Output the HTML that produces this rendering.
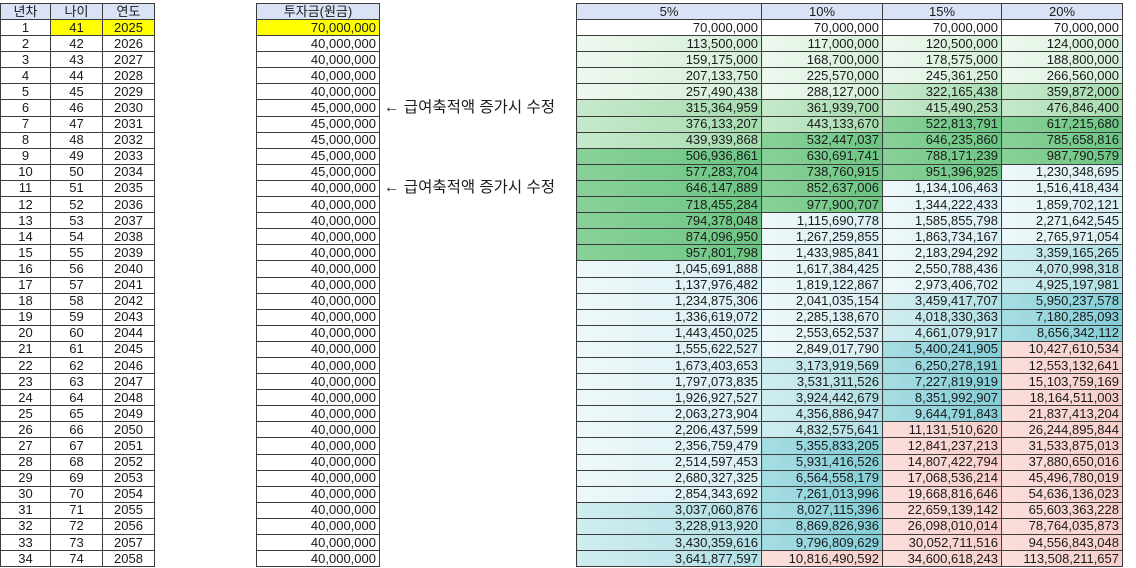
<!DOCTYPE html>
<html><head><meta charset="utf-8"><style>
body{margin:0;width:1136px;height:568px;background:#fff;overflow:hidden;position:relative;font-family:"Liberation Sans","Noto Sans CJK KR",sans-serif;font-size:13px;color:#1a1a1a}
table{position:absolute;border-collapse:collapse;table-layout:fixed;top:3px}
td,th{border:1px solid #3c3c3c;padding:0 3px;height:15.1px;line-height:14px;white-space:nowrap;overflow:hidden;font-weight:normal}
th{background:#d9e3f5;text-align:center;height:15px}
.c td{text-align:center}
.r td{text-align:right}
.y{background:#ffff00}
.g1{background:linear-gradient(90deg,#eef8ef,#d3eed7)}
.g2{background:linear-gradient(90deg,#c6e9cb,#a5dbad)}
.g3{background:linear-gradient(90deg,#88d198,#6cc582)}
.c1{background:linear-gradient(90deg,#eef8fa,#d8eff3)}
.c2{background:linear-gradient(90deg,#d0edf0,#b0dfe5)}
.c3{background:linear-gradient(90deg,#a6dde3,#83cdd6)}
.p{background:linear-gradient(90deg,#fbdedb,#f7ceca)}
.note{position:absolute;left:384px;font-size:15.5px;line-height:16px}
</style></head><body>
<table class="c" style="left:0;width:154px">
<colgroup><col style="width:50px"><col style="width:52px"><col style="width:52px"></colgroup>
<tr><th>년차</th><th>나이</th><th>연도</th></tr>
<tr><td>1</td><td class="y">41</td><td class="y">2025</td></tr>
<tr><td>2</td><td>42</td><td>2026</td></tr>
<tr><td>3</td><td>43</td><td>2027</td></tr>
<tr><td>4</td><td>44</td><td>2028</td></tr>
<tr><td>5</td><td>45</td><td>2029</td></tr>
<tr><td>6</td><td>46</td><td>2030</td></tr>
<tr><td>7</td><td>47</td><td>2031</td></tr>
<tr><td>8</td><td>48</td><td>2032</td></tr>
<tr><td>9</td><td>49</td><td>2033</td></tr>
<tr><td>10</td><td>50</td><td>2034</td></tr>
<tr><td>11</td><td>51</td><td>2035</td></tr>
<tr><td>12</td><td>52</td><td>2036</td></tr>
<tr><td>13</td><td>53</td><td>2037</td></tr>
<tr><td>14</td><td>54</td><td>2038</td></tr>
<tr><td>15</td><td>55</td><td>2039</td></tr>
<tr><td>16</td><td>56</td><td>2040</td></tr>
<tr><td>17</td><td>57</td><td>2041</td></tr>
<tr><td>18</td><td>58</td><td>2042</td></tr>
<tr><td>19</td><td>59</td><td>2043</td></tr>
<tr><td>20</td><td>60</td><td>2044</td></tr>
<tr><td>21</td><td>61</td><td>2045</td></tr>
<tr><td>22</td><td>62</td><td>2046</td></tr>
<tr><td>23</td><td>63</td><td>2047</td></tr>
<tr><td>24</td><td>64</td><td>2048</td></tr>
<tr><td>25</td><td>65</td><td>2049</td></tr>
<tr><td>26</td><td>66</td><td>2050</td></tr>
<tr><td>27</td><td>67</td><td>2051</td></tr>
<tr><td>28</td><td>68</td><td>2052</td></tr>
<tr><td>29</td><td>69</td><td>2053</td></tr>
<tr><td>30</td><td>70</td><td>2054</td></tr>
<tr><td>31</td><td>71</td><td>2055</td></tr>
<tr><td>32</td><td>72</td><td>2056</td></tr>
<tr><td>33</td><td>73</td><td>2057</td></tr>
<tr><td>34</td><td>74</td><td>2058</td></tr>
</table>

<table class="r" style="left:256px;width:124px">
<tr><th>투자금(원금)</th></tr>
<tr><td class="y">70,000,000</td></tr>
<tr><td>40,000,000</td></tr>
<tr><td>40,000,000</td></tr>
<tr><td>40,000,000</td></tr>
<tr><td>40,000,000</td></tr>
<tr><td>45,000,000</td></tr>
<tr><td>45,000,000</td></tr>
<tr><td>45,000,000</td></tr>
<tr><td>45,000,000</td></tr>
<tr><td>45,000,000</td></tr>
<tr><td>40,000,000</td></tr>
<tr><td>40,000,000</td></tr>
<tr><td>40,000,000</td></tr>
<tr><td>40,000,000</td></tr>
<tr><td>40,000,000</td></tr>
<tr><td>40,000,000</td></tr>
<tr><td>40,000,000</td></tr>
<tr><td>40,000,000</td></tr>
<tr><td>40,000,000</td></tr>
<tr><td>40,000,000</td></tr>
<tr><td>40,000,000</td></tr>
<tr><td>40,000,000</td></tr>
<tr><td>40,000,000</td></tr>
<tr><td>40,000,000</td></tr>
<tr><td>40,000,000</td></tr>
<tr><td>40,000,000</td></tr>
<tr><td>40,000,000</td></tr>
<tr><td>40,000,000</td></tr>
<tr><td>40,000,000</td></tr>
<tr><td>40,000,000</td></tr>
<tr><td>40,000,000</td></tr>
<tr><td>40,000,000</td></tr>
<tr><td>40,000,000</td></tr>
<tr><td>40,000,000</td></tr>
</table>
<div class="note" style="top:100px">← 급여축적액 증가시 수정</div>
<div class="note" style="top:180px">← 급여축적액 증가시 수정</div>

<table class="r" style="left:576px;width:546px">
<colgroup><col style="width:185px"><col style="width:121px"><col style="width:119px"><col style="width:121px"></colgroup>
<tr><th>5%</th><th>10%</th><th>15%</th><th>20%</th></tr>
<tr><td>70,000,000</td><td>70,000,000</td><td>70,000,000</td><td>70,000,000</td></tr>
<tr><td class="g1">113,500,000</td><td class="g1">117,000,000</td><td class="g1">120,500,000</td><td class="g1">124,000,000</td></tr>
<tr><td class="g1">159,175,000</td><td class="g1">168,700,000</td><td class="g1">178,575,000</td><td class="g1">188,800,000</td></tr>
<tr><td class="g1">207,133,750</td><td class="g1">225,570,000</td><td class="g1">245,361,250</td><td class="g1">266,560,000</td></tr>
<tr><td class="g1">257,490,438</td><td class="g1">288,127,000</td><td class="g2">322,165,438</td><td class="g2">359,872,000</td></tr>
<tr><td class="g2">315,364,959</td><td class="g2">361,939,700</td><td class="g2">415,490,253</td><td class="g2">476,846,400</td></tr>
<tr><td class="g2">376,133,207</td><td class="g2">443,133,670</td><td class="g3">522,813,791</td><td class="g3">617,215,680</td></tr>
<tr><td class="g2">439,939,868</td><td class="g3">532,447,037</td><td class="g3">646,235,860</td><td class="g3">785,658,816</td></tr>
<tr><td class="g3">506,936,861</td><td class="g3">630,691,741</td><td class="g3">788,171,239</td><td class="g3">987,790,579</td></tr>
<tr><td class="g3">577,283,704</td><td class="g3">738,760,915</td><td class="g3">951,396,925</td><td class="c1">1,230,348,695</td></tr>
<tr><td class="g3">646,147,889</td><td class="g3">852,637,006</td><td class="c1">1,134,106,463</td><td class="c1">1,516,418,434</td></tr>
<tr><td class="g3">718,455,284</td><td class="g3">977,900,707</td><td class="c1">1,344,222,433</td><td class="c1">1,859,702,121</td></tr>
<tr><td class="g3">794,378,048</td><td class="c1">1,115,690,778</td><td class="c1">1,585,855,798</td><td class="c1">2,271,642,545</td></tr>
<tr><td class="g3">874,096,950</td><td class="c1">1,267,259,855</td><td class="c1">1,863,734,167</td><td class="c1">2,765,971,054</td></tr>
<tr><td class="g3">957,801,798</td><td class="c1">1,433,985,841</td><td class="c1">2,183,294,292</td><td class="c2">3,359,165,265</td></tr>
<tr><td class="c1">1,045,691,888</td><td class="c1">1,617,384,425</td><td class="c1">2,550,788,436</td><td class="c2">4,070,998,318</td></tr>
<tr><td class="c1">1,137,976,482</td><td class="c1">1,819,122,867</td><td class="c1">2,973,406,702</td><td class="c2">4,925,197,981</td></tr>
<tr><td class="c1">1,234,875,306</td><td class="c1">2,041,035,154</td><td class="c2">3,459,417,707</td><td class="c3">5,950,237,578</td></tr>
<tr><td class="c1">1,336,619,072</td><td class="c1">2,285,138,670</td><td class="c2">4,018,330,363</td><td class="c3">7,180,285,093</td></tr>
<tr><td class="c1">1,443,450,025</td><td class="c1">2,553,652,537</td><td class="c2">4,661,079,917</td><td class="c3">8,656,342,112</td></tr>
<tr><td class="c1">1,555,622,527</td><td class="c1">2,849,017,790</td><td class="c3">5,400,241,905</td><td class="p">10,427,610,534</td></tr>
<tr><td class="c1">1,673,403,653</td><td class="c2">3,173,919,569</td><td class="c3">6,250,278,191</td><td class="p">12,553,132,641</td></tr>
<tr><td class="c1">1,797,073,835</td><td class="c2">3,531,311,526</td><td class="c3">7,227,819,919</td><td class="p">15,103,759,169</td></tr>
<tr><td class="c1">1,926,927,527</td><td class="c2">3,924,442,679</td><td class="c3">8,351,992,907</td><td class="p">18,164,511,003</td></tr>
<tr><td class="c1">2,063,273,904</td><td class="c2">4,356,886,947</td><td class="c3">9,644,791,843</td><td class="p">21,837,413,204</td></tr>
<tr><td class="c1">2,206,437,599</td><td class="c2">4,832,575,641</td><td class="p">11,131,510,620</td><td class="p">26,244,895,844</td></tr>
<tr><td class="c1">2,356,759,479</td><td class="c3">5,355,833,205</td><td class="p">12,841,237,213</td><td class="p">31,533,875,013</td></tr>
<tr><td class="c1">2,514,597,453</td><td class="c3">5,931,416,526</td><td class="p">14,807,422,794</td><td class="p">37,880,650,016</td></tr>
<tr><td class="c1">2,680,327,325</td><td class="c3">6,564,558,179</td><td class="p">17,068,536,214</td><td class="p">45,496,780,019</td></tr>
<tr><td class="c1">2,854,343,692</td><td class="c3">7,261,013,996</td><td class="p">19,668,816,646</td><td class="p">54,636,136,023</td></tr>
<tr><td class="c2">3,037,060,876</td><td class="c3">8,027,115,396</td><td class="p">22,659,139,142</td><td class="p">65,603,363,228</td></tr>
<tr><td class="c2">3,228,913,920</td><td class="c3">8,869,826,936</td><td class="p">26,098,010,014</td><td class="p">78,764,035,873</td></tr>
<tr><td class="c2">3,430,359,616</td><td class="c3">9,796,809,629</td><td class="p">30,052,711,516</td><td class="p">94,556,843,048</td></tr>
<tr><td class="c2">3,641,877,597</td><td class="p">10,816,490,592</td><td class="p">34,600,618,243</td><td class="p">113,508,211,657</td></tr>
</table>
</body></html>
